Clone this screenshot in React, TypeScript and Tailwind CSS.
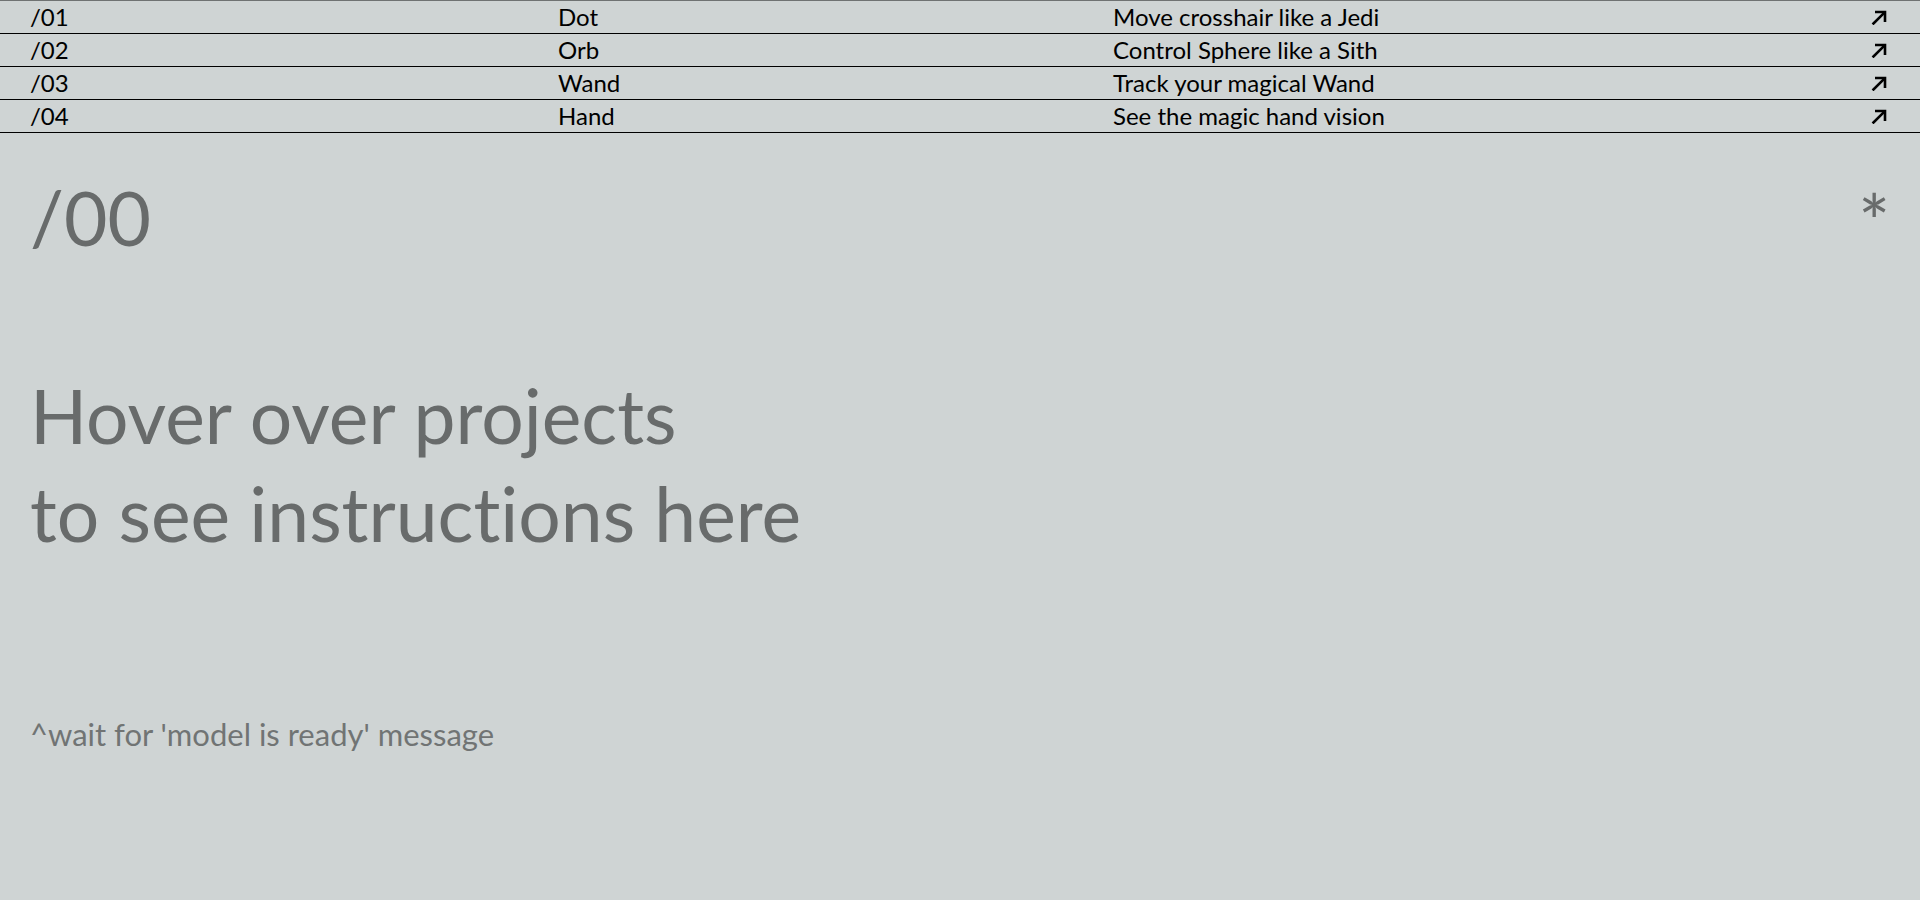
const projects = [
  { id: "/01", name: "Dot", desc: "Move crosshair like a Jedi" },
  { id: "/02", name: "Orb", desc: "Control Sphere like a Sith" },
  { id: "/03", name: "Wand", desc: "Track your magical Wand" },
  { id: "/04", name: "Hand", desc: "See the magic hand vision" },
]

function Arrow() {
  return (
    <svg viewBox="0 0 16 16" className="h-[16px] w-[16px]" fill="none" stroke="currentColor" strokeWidth={2.6} strokeLinecap="square">
      <path d="M2.5 14.5 13 4" />
      <path d="M4 3h10v10" strokeLinecap="butt" />
    </svg>
  )
}

export default function App() {
  return (
    <div className="min-h-[900px] w-full bg-[#cfd4d4] font-['Lato',sans-serif] [font-variant-ligatures:none]">
      {/* Project list */}
      <ul className="border-t border-[#6f7272]">
        {projects.map((p) => (
          <li
            key={p.id}
            className="grid h-[33px] grid-cols-[528px_555px_1fr_auto] items-center border-b border-black pl-[30px] pr-[33px] text-[24px] leading-none text-black"
          >
            <span>{p.id}</span>
            <span>{p.name}</span>
            <span>{p.desc}</span>
            <Arrow />
          </li>
        ))}
      </ul>

      {/* Instructions */}
      <section className="px-[30px] pt-[39px] text-[#686b6b]">
        <div className="flex h-[90px] items-start justify-between text-[75px] leading-[90px]">
          <span>/00</span>
          <span className="pt-[4px]">*</span>
        </div>
        <h1 className="mt-[104px] text-[75px] leading-[98px]">
          Hover over projects
          <br />
          to see instructions here
        </h1>
        <p className="mt-[149px] text-[31px] text-[#717474]">^wait for 'model is ready' message</p>
      </section>
    </div>
  )
}
